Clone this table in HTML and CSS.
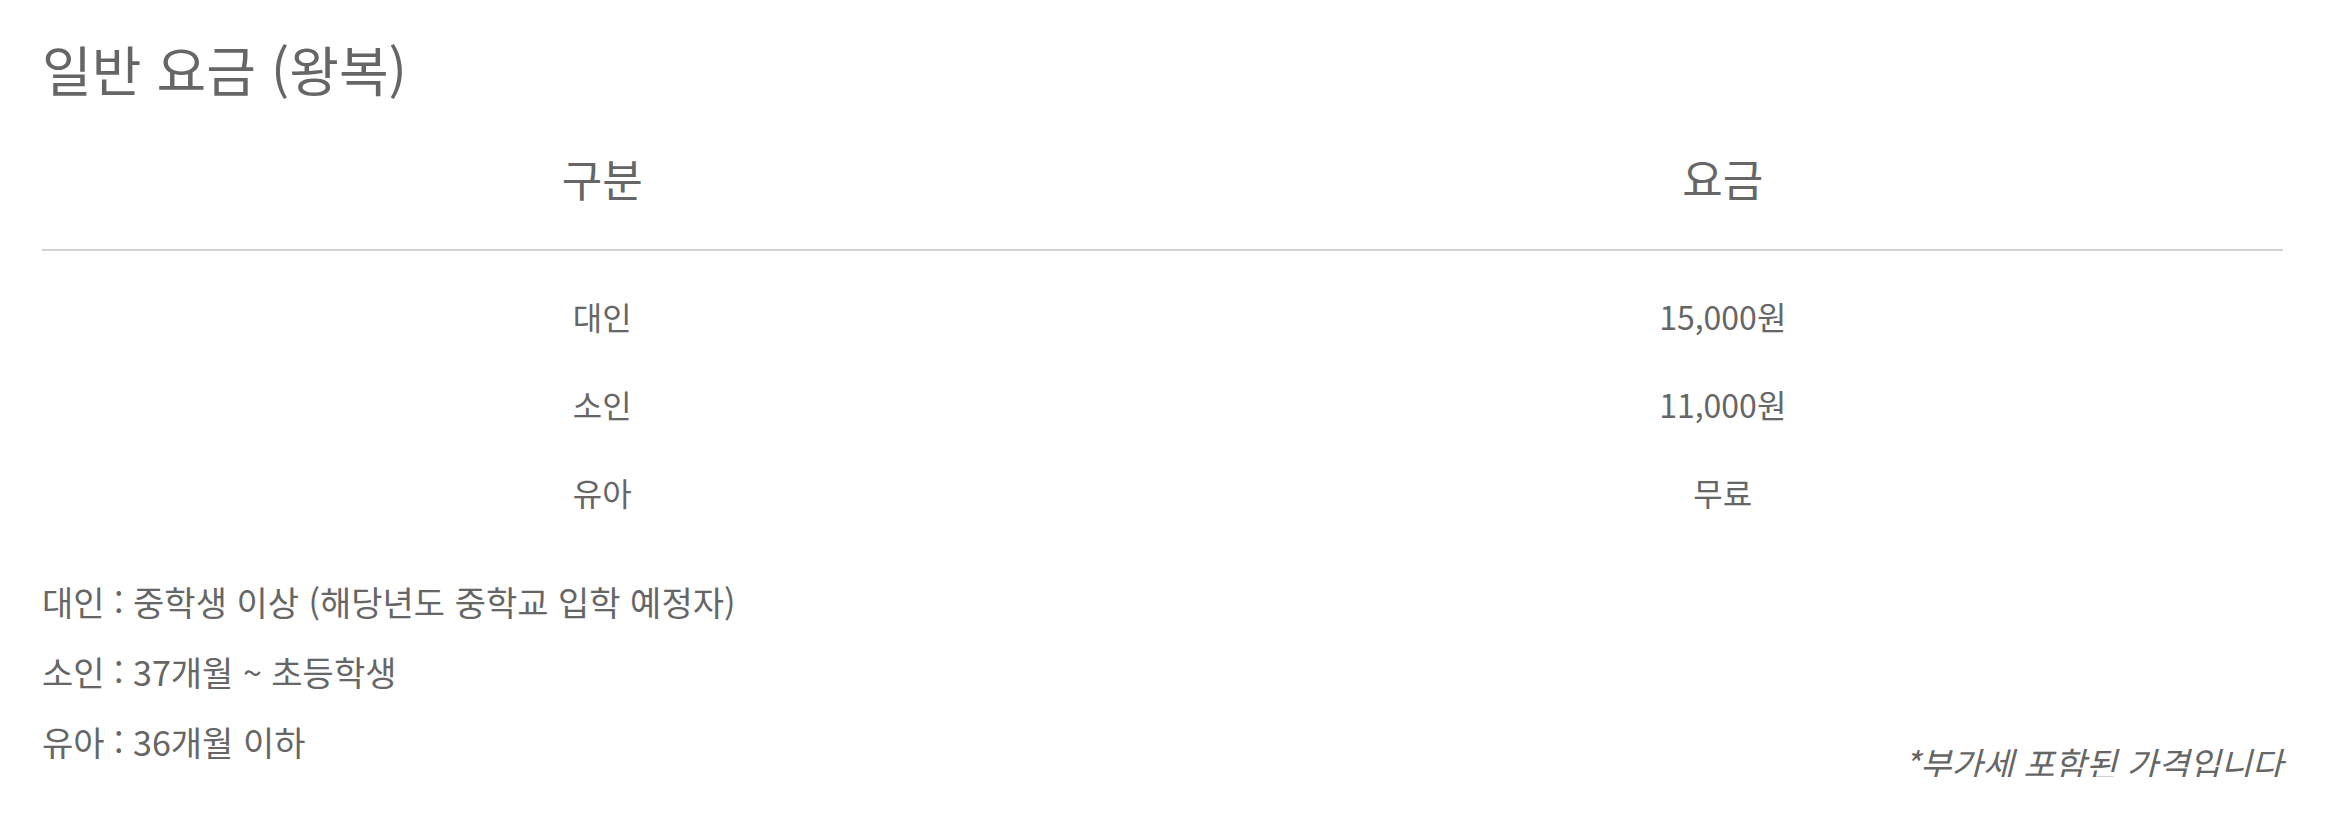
FILE: index.html
```html
<!DOCTYPE html>
<html lang="ko">
<head>
    <meta charset="UTF-8">
    <meta name="viewport" content="width=device-width, initial-scale=1.0">
    <title>일반 요금 (왕복)</title>
    <link rel="stylesheet" href="styles.css">
</head>
<body>
    <section class="fare">
        <h2 class="fare-title">일반 요금 (왕복)</h2>
        <table class="fare-table">
            <thead>
                <tr>
                    <th>구분</th>
                    <th>요금</th>
                </tr>
            </thead>
            <tbody>
                <tr>
                    <td>대인</td>
                    <td>15,000원</td>
                </tr>
                <tr>
                    <td>소인</td>
                    <td>11,000원</td>
                </tr>
                <tr>
                    <td>유아</td>
                    <td>무료</td>
                </tr>
            </tbody>
        </table>
        <div class="fare-footer">
            <ul class="fare-notes">
                <li>대인 : 중학생 이상 (해당년도 중학교 입학 예정자)</li>
                <li>소인 : 37개월 ~ 초등학생</li>
                <li>유아 : 36개월 이하</li>
            </ul>
            <p class="fare-vat">*부가세 포함된 가격입니다</p>
        </div>
    </section>
</body>
</html>
```

FILE: styles.css
```css
* {
    margin: 0;
    padding: 0;
    box-sizing: border-box;
}
body {
    font-family: "Noto Sans CJK KR", "Noto Sans", sans-serif;
    background: #fff;
    color: #666;
}
.fare {
    padding: 0 42px;
}
.fare-title {
    margin-top: 39px;
    font-size: 54px;
    font-weight: 400;
    line-height: 60px;
}
.fare-table {
    width: 100%;
    border-collapse: collapse;
    table-layout: fixed;
}
.fare-table th {
    width: 50%;
    padding: 49px 0 41px;
    font-size: 44px;
    font-weight: 400;
    line-height: 60px;
    border-bottom: 2px solid #d3d3d3;
}
.fare-table td {
    padding: 20px 0;
    text-align: center;
    font-size: 32px;
    line-height: 48px;
}
.fare-table tbody tr:first-child td {
    padding-top: 41px;
}
.fare-footer {
    display: flex;
    justify-content: space-between;
    align-items: flex-end;
    margin-top: 31px;
}
.fare-notes {
    list-style: none;
    font-size: 34px;
    line-height: 70px;
}
.fare-vat {
    font-size: 34px;
    font-style: italic;
    line-height: 28px;
}
```
